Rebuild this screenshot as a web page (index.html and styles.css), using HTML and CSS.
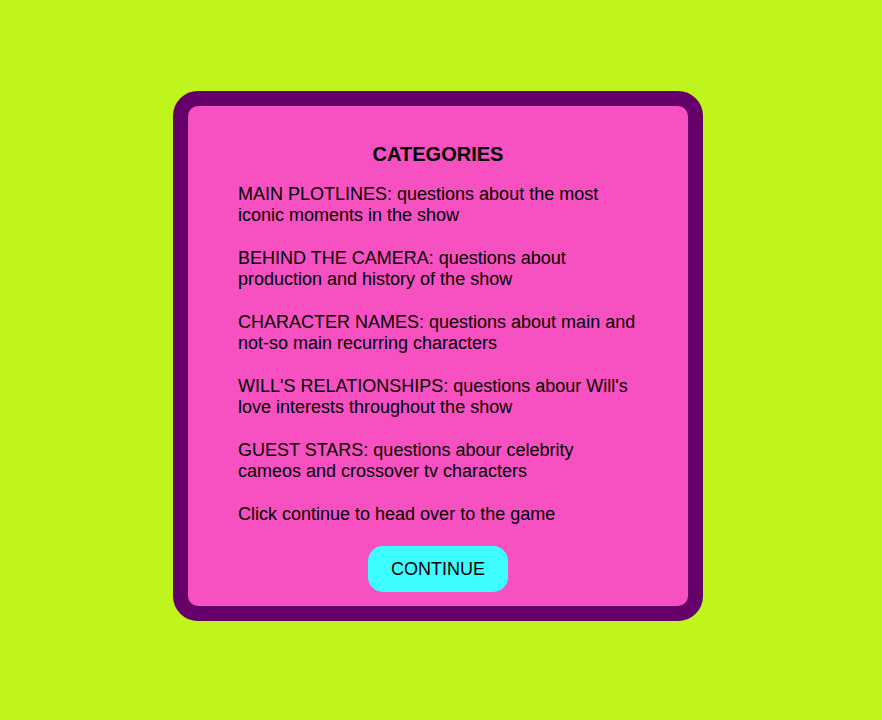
FILE: index.html
```html
<!DOCTYPE html>
<html lang="en">
<head>
<meta charset="utf-8">
<title>Categories</title>
<link rel="stylesheet" href="styles.css">
</head>
<body>
<main class="stage">
  <section class="card">
    <h2 class="card-title">CATEGORIES</h2>
    <div class="card-body">
      <p class="cat">MAIN PLOTLINES: questions about the most iconic moments in the show</p>
      <p class="cat">BEHIND THE CAMERA: questions about production and history of the show</p>
      <p class="cat">CHARACTER NAMES: questions about main and not-so main recurring characters</p>
      <p class="cat">WILL'S RELATIONSHIPS: questions abour Will's love interests throughout the show</p>
      <p class="cat">GUEST STARS: questions abour celebrity cameos and crossover tv characters</p>
      <p class="cat last">Click continue to head over to the game</p>
    </div>
    <button class="continue-btn" type="button">CONTINUE</button>
  </section>
</main>
</body>
</html>
```

FILE: styles.css
```css
* { box-sizing: border-box; }

html, body {
  margin: 0;
  padding: 0;
}

body {
  background: #bff51d;
  font-family: "Liberation Sans", Arial, sans-serif;
  color: #000;
}

.stage {
  min-height: 720px;
  display: flex;
  align-items: center;
  justify-content: center;
  padding: 0 6px 8px 0;
}

.card {
  width: 530px;
  height: 530px;
  background: #f650c1;
  border: 15px solid #65006a;
  border-radius: 25px;
  padding: 37px 50px 13px;
  display: flex;
  flex-direction: column;
  align-items: center;
}

.card-title {
  margin: 0 0 18px;
  font-size: 20px;
  line-height: 23px;
  font-weight: bold;
  text-align: center;
}

.card-body {
  width: 100%;
}

.cat {
  margin: 0 0 22px;
  font-size: 18px;
  line-height: 21px;
}

.cat.last {
  margin-bottom: 21px;
}

.continue-btn {
  width: 140px;
  height: 46px;
  border: none;
  border-radius: 15px;
  background: #3dfdff;
  color: #000;
  font-family: "Liberation Sans", Arial, sans-serif;
  font-size: 18px;
  padding: 0;
  cursor: pointer;
}
```
